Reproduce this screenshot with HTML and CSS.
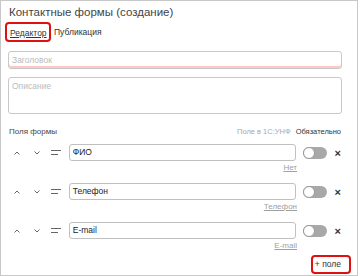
FILE: index.html
```html
<!DOCTYPE html>
<html lang="ru">
<head>
<meta charset="utf-8">
<link rel="stylesheet" href="styles.css">
</head>
<body>
<div class="panel">
  <div class="title">Контактные формы (создание)</div>
  <div class="tabs">
    <span class="tab active">Редактор</span>
    <span class="tab">Публикация</span>
  </div>
  <div class="field heading"><span class="ph">Заголовок</span></div>
  <div class="field desc"><span class="ph">Описание</span></div>
  <div class="fields-head">
    <span class="fh-label">Поля формы</span>
    <span class="fh-src">Поле в 1С:УНФ</span>
    <span class="fh-req">Обязательно</span>
  </div>

  <div class="row">
    <div class="ctrls">
      <svg class="ic up" width="6" height="4" viewBox="0 0 6 4"><path d="M0.5 3.5 L3 1 L5.5 3.5" fill="none" stroke="#666" stroke-width="1"/></svg>
      <svg class="ic down" width="6" height="4" viewBox="0 0 6 4"><path d="M0.5 0.5 L3 3 L5.5 0.5" fill="none" stroke="#666" stroke-width="1"/></svg>
      <svg class="ic drag" width="10" height="5" viewBox="0 0 10 5"><path d="M0 0.5 H10 M0 4.5 H7" stroke="#666" stroke-width="1"/></svg>
    </div>
    <div class="input">ФИО</div>
    <span class="toggle"><span class="knob"></span></span>
    <span class="del">×</span>
  </div>
  <div class="link-row"><span class="link">Нет</span></div>

  <div class="row">
    <div class="ctrls">
      <svg class="ic up" width="6" height="4" viewBox="0 0 6 4"><path d="M0.5 3.5 L3 1 L5.5 3.5" fill="none" stroke="#666" stroke-width="1"/></svg>
      <svg class="ic down" width="6" height="4" viewBox="0 0 6 4"><path d="M0.5 0.5 L3 3 L5.5 0.5" fill="none" stroke="#666" stroke-width="1"/></svg>
      <svg class="ic drag" width="10" height="5" viewBox="0 0 10 5"><path d="M0 0.5 H10 M0 4.5 H7" stroke="#666" stroke-width="1"/></svg>
    </div>
    <div class="input">Телефон</div>
    <span class="toggle"><span class="knob"></span></span>
    <span class="del">×</span>
  </div>
  <div class="link-row"><span class="link">Телефон</span></div>

  <div class="row">
    <div class="ctrls">
      <svg class="ic up" width="6" height="4" viewBox="0 0 6 4"><path d="M0.5 3.5 L3 1 L5.5 3.5" fill="none" stroke="#666" stroke-width="1"/></svg>
      <svg class="ic down" width="6" height="4" viewBox="0 0 6 4"><path d="M0.5 0.5 L3 3 L5.5 0.5" fill="none" stroke="#666" stroke-width="1"/></svg>
      <svg class="ic drag" width="10" height="5" viewBox="0 0 10 5"><path d="M0 0.5 H10 M0 4.5 H7" stroke="#666" stroke-width="1"/></svg>
    </div>
    <div class="input">E-mail</div>
    <span class="toggle"><span class="knob"></span></span>
    <span class="del">×</span>
  </div>
  <div class="link-row"><span class="link">E-mail</span></div>

  <div class="add-row"><span class="add">+ поле</span></div>
</div>
</body>
</html>
```
FILE: styles.css
```css
* { box-sizing: border-box; }
html, body { margin: 0; padding: 0; background: #fff; }
body {
  font-family: "Liberation Sans", Arial, sans-serif;
  color: #333;
  width: 360px;
  height: 276px;
  overflow: hidden;
}
.panel {
  width: 358px;
  height: 276px;
  border: 1px solid #c8c8c8;
  padding: 0 16px 0 7px;
}
.title {
  font-size: 11.5px;
  line-height: 14px;
  padding-top: 4px;
  color: #444;
  padding-left: 1px;
}
.tabs {
  display: flex;
  align-items: center;
  margin-top: 3px;
  margin-left: -3px;
  height: 20px;
  font-size: 8.5px;
}
.tab { color: #333; }
.tab.active {
  border: 2px solid #d11;
  border-radius: 4px;
  padding: 2px 3px 0 3px;
  text-decoration: underline;
  margin-right: 3px;
  height: 20px;
  width: 46px;
  display: flex;
  align-items: center;
}
.field {
  border: 1px solid #c8c8c8;
  border-radius: 3px;
  font-size: 8.5px;
  padding: 3px 3px;
  width: 334px;
}
.ph { color: #bbb; }
.heading {
  margin-top: 9px;
  height: 18px;
  line-height: 10px;
  box-shadow: inset 0 -2px 0 #ffc8c8;
}
.desc {
  margin-top: 8px;
  height: 37px;
  line-height: 10px;
}
.fields-head {
  display: flex;
  align-items: center;
  font-size: 8px;
  margin-top: 11px;
  height: 12px;
  padding-left: 1px;
}
.fh-label { color: #444; flex: 1; }
.fh-src { color: #a8a8a8; margin-right: 5px; font-size: 7.5px; }
.fh-req { color: #333; font-size: 7.5px; }
.row {
  display: flex;
  align-items: center;
  height: 17px;
  margin-top: 7px;
}
.link-row + .row { margin-top: 6px; }
.ctrls {
  display: flex;
  align-items: center;
  width: 61px;
  padding-left: 6px;
}
.ic { display: block; }
.ic.down { margin-left: 14px; }
.ic.drag { margin-left: 11px; }
.input {
  width: 228px;
  height: 17px;
  border: 1px solid #c0c0c0;
  border-radius: 3px;
  font-size: 8.5px;
  color: #222;
  padding: 0 3px;
  line-height: 15px;
}
.toggle {
  position: relative;
  display: block;
  width: 24px;
  height: 12px;
  margin-left: 7px;
  border-radius: 6px;
  background: #a8a8a8;
}
.knob {
  position: absolute;
  left: 0;
  top: 0;
  width: 12px;
  height: 12px;
  border-radius: 50%;
  background: #fff;
  border: 1px solid #999;
}
.del {
  margin-left: 8px;
  font-size: 11px;
  font-weight: bold;
  color: #333;
  line-height: 12px;
}
.link-row {
  display: flex;
  justify-content: flex-end;
  width: 289px;
  height: 16px;
  font-size: 8px;
  line-height: 10px;
  padding-top: 2px;
}
.link { color: #a0a0a0; text-decoration: underline; }
.add-row {
  display: flex;
  justify-content: flex-end;
  margin-right: -10px;
}
.add {
  border: 2px solid #d11;
  border-radius: 4px;
  font-size: 8.5px;
  color: #333;
  padding: 0 8px 0 2px;
  height: 19px;
  line-height: 15px;
}
```
